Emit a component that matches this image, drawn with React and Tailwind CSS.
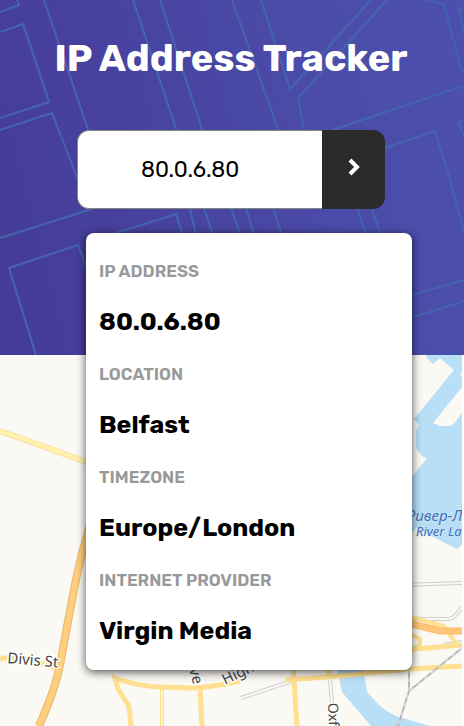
const details = [
  ["IP ADDRESS", "80.0.6.80"],
  ["LOCATION", "Belfast"],
  ["TIMEZONE", "Europe/London"],
  ["INTERNET PROVIDER", "Virgin Media"],
];

const minorRoads =
  "M400 230L462 228M400 263L425 264L449 264Q455 263 462 252M444 290L462 287M241 343L292 326M330 325L332 348";

const mainRoad = "M97 150Q82 190 72 245L60 310Q55 335 39 371";

function HeaderPattern() {
  return (
    <svg
      className="absolute inset-0 h-full w-full"
      viewBox="0 0 464 355"
      preserveAspectRatio="xMidYMid slice"
      aria-hidden="true"
    >
      <defs>
        <linearGradient id="sky" x1="0" y1="0.6" x2="1" y2="0.4">
          <stop offset="0" stopColor="#453c98" />
          <stop offset="0.5" stopColor="#4946a3" />
          <stop offset="0.75" stopColor="#4b4caa" />
          <stop offset="1" stopColor="#4c4fad" />
        </linearGradient>
      </defs>
      <rect width="464" height="355" fill="url(#sky)" />
      <g fill="none" stroke="#4565ab" strokeWidth="2">
        <path d="M17 0L19 5L0 12" />
        <path d="M0 32L23 24L49 102L0 118" />
        <path d="M0 130L52 113L80 185" />
        <path d="M44 0L90 135" />
        <path d="M133 0L178 135L222 260" />
        <path d="M160 0L204 135L250 260" />
        <path d="M232 0L280 135" />
        <path d="M261 0L290 89L371 0" />
        <path d="M387 0L298 98L305 135" />
        <path d="M332 130L464 86" />
        <path d="M385 148L435 131L450 180L464 232" />
        <path d="M425 0L444 4L461 68L464 72" />
        <path d="M464 10L459 8L464 35" />
        <path d="M464 120L459 122L464 137" />
        <path d="M0 238L92 209" />
        <path d="M36 355L9 268L78 245L95 290" />
        <path d="M110 235L176 214L186 245" />
        <path d="M190 208L198 245" />
        <path d="M246 208L256 240" />
        <path d="M273 208L284 240" />
        <path d="M357 208L368 240" />
        <path d="M372 208L382 240" />
        <path d="M405 297L464 280" />
        <path d="M405 320L464 301" />
      </g>
    </svg>
  );
}

function StreetMap() {
  return (
    <svg
      className="absolute inset-0 h-full w-full"
      viewBox="0 0 462 371"
      preserveAspectRatio="xMidYMid slice"
      role="img"
      aria-label="Map of Belfast"
    >
      <rect width="462" height="371" fill="#faf9f4" />
      <g fill="#b8dff6">
        <path d="M426 0L427 3L433 9L440 3L454 15L414 64L419 70L416 76V93L423 102L427 103L400 137V178H412L416 173L457 194L462 190V58L456 66Q453 71 447 71H440L433 68L462 32V0Z" />
        <path d="M337 312H364V320L367 337L379 350Q388 358 399 362L430 371H371L342 337Z" />
      </g>
      <path d="M460 19L462 17V22Z" fill="#faf9f4" />
      <g fill="none">
        <path d={minorRoads} stroke="#cfcfcf" strokeWidth="4" />
        <path d={minorRoads} stroke="#faf9f4" strokeWidth="2" />
        <path d="M0 76Q35 88 100 112" stroke="#f9dfa5" strokeWidth="6" />
        <path d="M0 76Q35 88 100 112" stroke="#fff2ac" strokeWidth="4" />
        <g stroke="#ffdf90" strokeWidth="5">
          <path d="M0 304Q20 298 60 315" />
          <path d="M131 371L129 351L118 334L115 323Q137 331 160 332L192 333Q215 332 240 326" />
          <path d="M286 325L340 321L409 314L462 311" />
          <path d="M162 333V371" strokeWidth="4" />
          <path d="M200 333L202 371M293 310L294 325L297 371M329 310V320" />
          <path d="M400 297L415 294L462 290" />
          <path d="M406 277L420 284V290L413 294M406 261L418 264L444 271L457 290" strokeWidth="4" />
        </g>
        <path d="M162 336V371" stroke="#fff6c7" strokeWidth="2" />
        <path d={mainRoad} stroke="#edb26b" strokeWidth="8" />
        <path d={mainRoad} stroke="#ffcf80" strokeWidth="6" />
        <path d="M400 266L420 271L440 276H462" stroke="#ffba66" strokeWidth="7" />
        <path d="M400 266L420 271L440 276H462" stroke="#ffc57a" strokeWidth="5" />
        <path d="M462 293L409 336L398 371M409 336V310" stroke="#b5b6b5" strokeWidth="2" />
        <path d="M462 293L409 336L398 371M409 336V310" stroke="#eee" strokeWidth="1" strokeDasharray="4 5" />
      </g>
      <g fontFamily="'Noto Sans', sans-serif" paintOrder="stroke" strokeLinejoin="round">
        <g fill="#3b6fbc" fontStyle="italic" stroke="#d5e9f5" strokeWidth="1">
          <text x="407" y="166" fontSize="15">Ривер-Л</text>
          <text x="416" y="181" fontSize="13">River La</text>
        </g>
        <g fill="#444" stroke="#fff" strokeWidth="3" fontSize="15">
          <text x="7" y="308" transform="rotate(5 7 308)">Divis St</text>
          <text x="187" y="305" transform="rotate(76 187 305)">Ave</text>
          <text x="225" y="330" transform="rotate(-26 225 330)">High</text>
          <text x="328" y="348" fontSize="14" transform="rotate(88 328 348)">Oxfo</text>
        </g>
      </g>
    </svg>
  );
}

export default function App() {
  return (
    <main className="relative flex min-h-screen flex-col bg-white font-['Rubik','Inter',sans-serif]">
      <header className="relative flex h-[355px] flex-col items-center pr-0.5">
        <HeaderPattern />
        <h1 className="relative pt-9 text-[38px] leading-11 font-bold text-white">
          IP Address Tracker
        </h1>
        <form
          className="relative mt-[50px] flex h-[79px] w-[308px]"
          onSubmit={(event) => event.preventDefault()}
        >
          <input
            aria-label="IP address"
            defaultValue="80.0.6.80"
            className="min-w-0 flex-1 rounded-l-xl border border-r-0 border-[#858585] bg-white pl-[63px] text-[22px] text-black outline-none"
          />
          <button
            aria-label="Search"
            className="flex w-[63px] items-center justify-center rounded-r-xl bg-[#2b2b2b] pb-1.5 text-white"
          >
            <svg width="12" height="18" viewBox="0 0 12 18" fill="none" stroke="currentColor" strokeWidth="4" aria-hidden="true">
              <path d="M2 2L9 9L2 16" />
            </svg>
          </button>
        </form>
      </header>
      <section className="relative mr-0.5 flex-1 overflow-hidden">
        <StreetMap />
      </section>
      <dl className="absolute top-[233px] right-[52px] left-[86px] rounded-lg bg-white px-[13px] pt-[26px] pb-[23px] shadow-[0_2px_10px_rgba(0,0,0,0.7)]">
        {details.map(([label, value]) => (
          <div key={label} className="mb-6 last:mb-0">
            <dt className="text-[17px] leading-6 font-semibold text-[#999]">{label}</dt>
            <dd className="mt-[23px] text-[25px] leading-8 font-bold text-black">{value}</dd>
          </div>
        ))}
      </dl>
    </main>
  );
}
